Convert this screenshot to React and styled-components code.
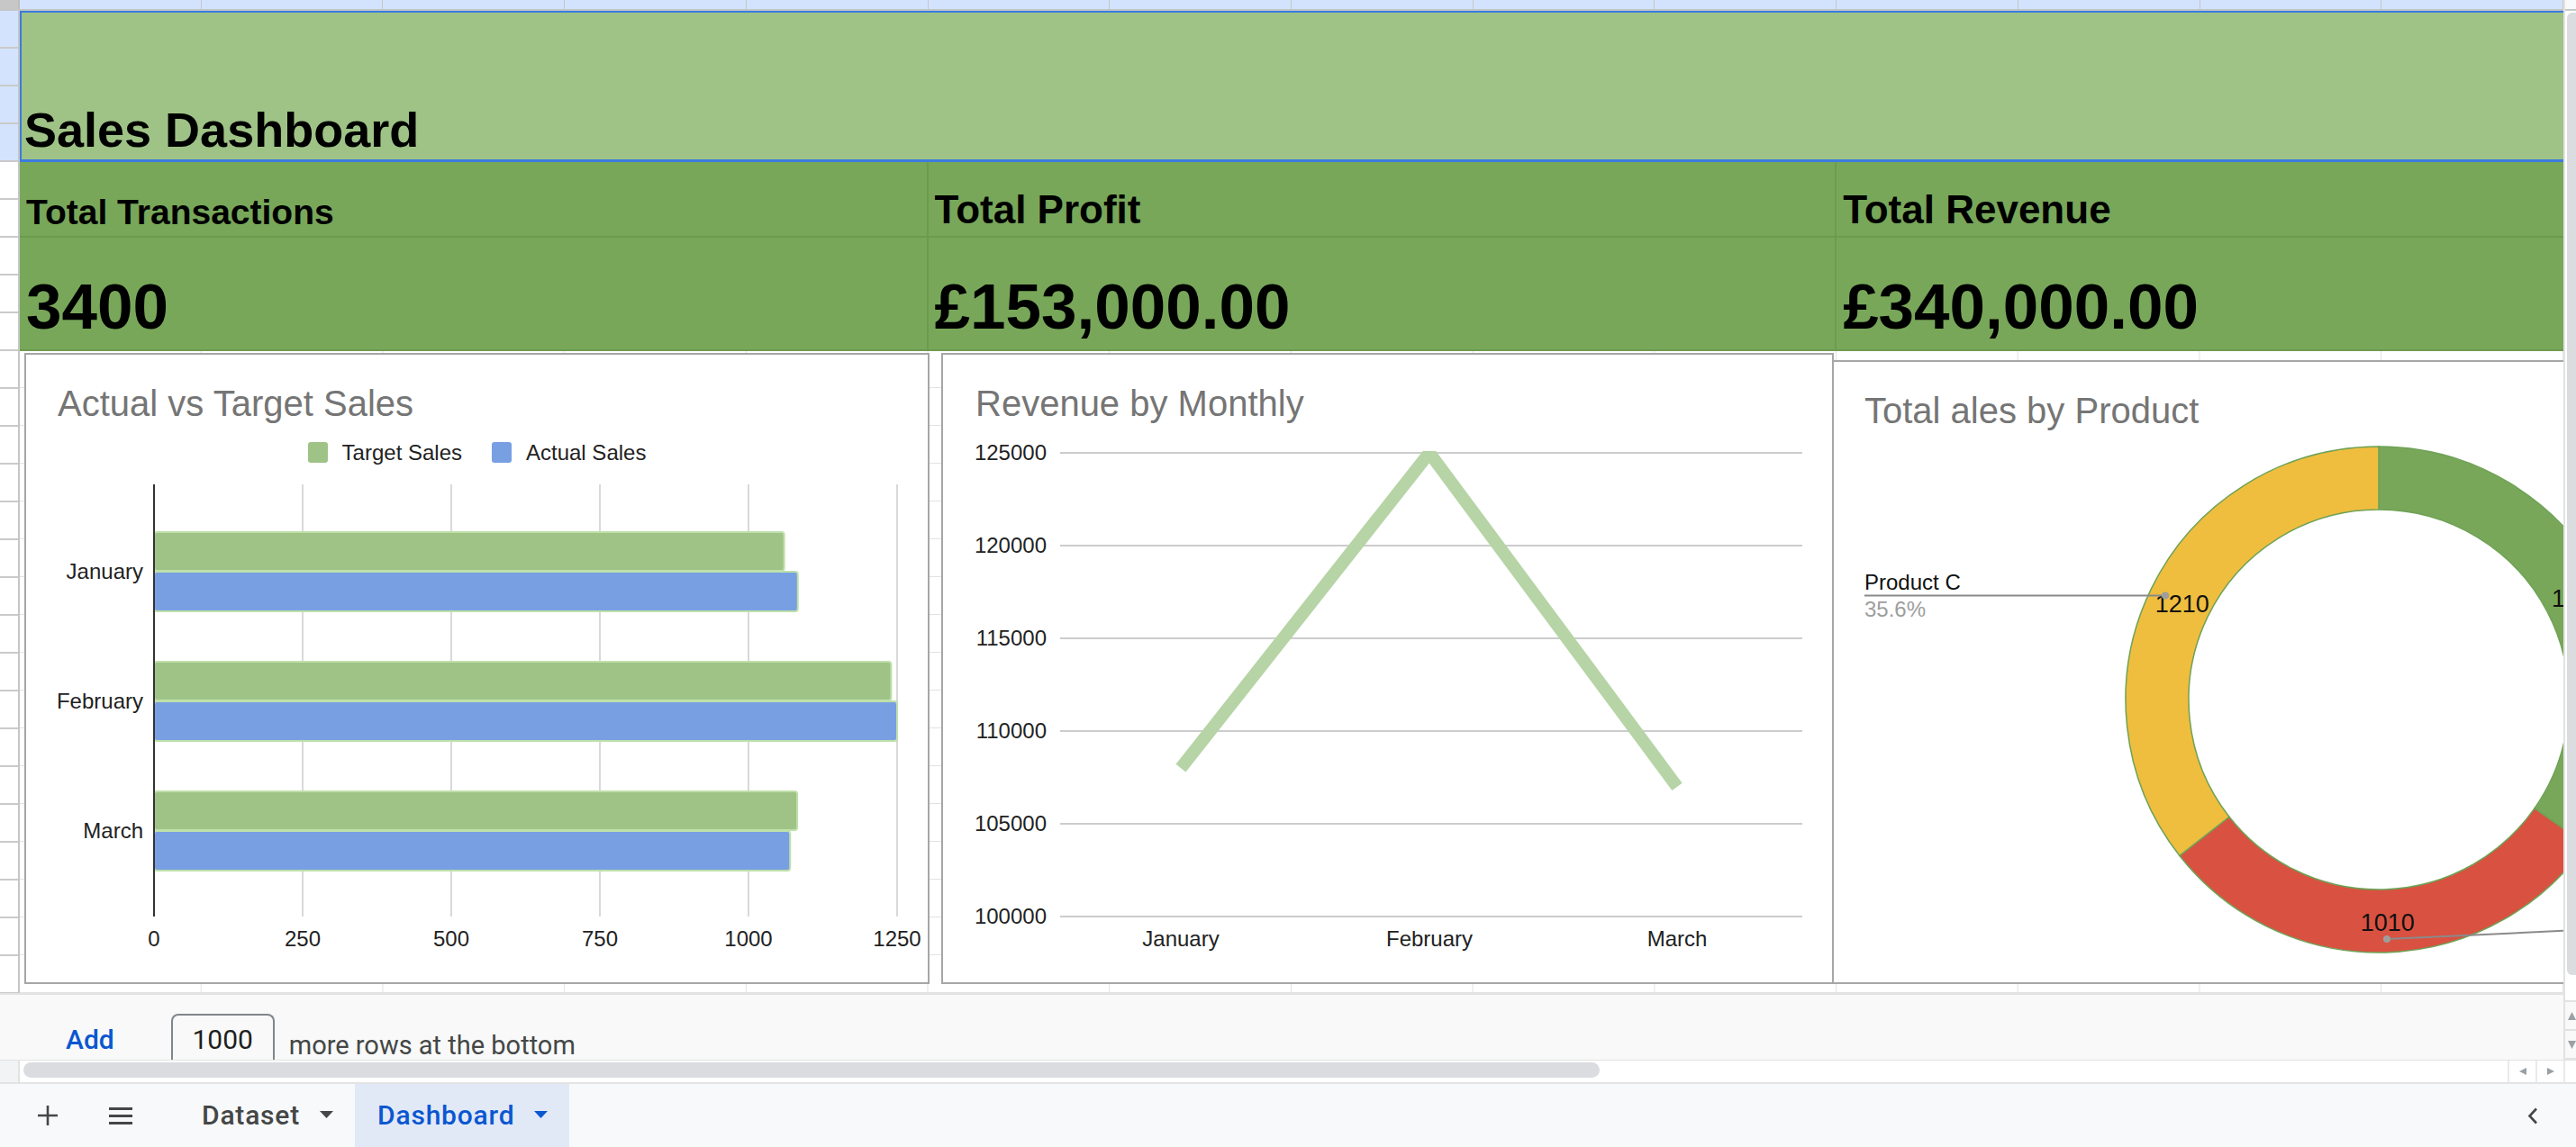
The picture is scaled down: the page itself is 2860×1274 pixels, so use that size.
import React from "react";
import styled, { createGlobalStyle } from "styled-components";

const COL_W = 2824 / 14;
const ROW_H = 42;
const UI_FONT = `Roboto, "Liberation Sans", Arial, sans-serif`;

const GlobalStyle = createGlobalStyle`
  html, body {
    margin: 0;
    padding: 0;
    background: #ffffff;
    overflow: hidden;
  }
  body {
    font-family: "Liberation Sans", Arial, sans-serif;
    color: #000000;
  }
  * {
    box-sizing: border-box;
  }
`;

const Page = styled.div`
  width: 2860px;
  height: 1274px;
  display: flex;
  flex-direction: column;
  overflow: hidden;
`;

const Workspace = styled.div`
  display: flex;
  height: 1177px;
  flex-shrink: 0;
`;

const MainColumn = styled.div`
  width: 2846px;
  display: flex;
  flex-direction: column;
`;

const ColumnHeaderBar = styled.div`
  display: flex;
  height: 12px;
  flex-shrink: 0;
  border-bottom: 2px solid #c4c7c5;
`;

const CornerCell = styled.div`
  width: 22px;
  background: #c7c7c7;
  border-right: 2px solid #bdbdbd;
`;

const ColumnHeader = styled.div`
  flex: 1;
  background: #d3e3fd;
  border-right: 1px solid #c4c7c5;
`;

const Body = styled.div`
  display: flex;
  height: 1091px;
  flex-shrink: 0;
  overflow: hidden;
`;

const RowHeaders = styled.div`
  width: 22px;
  flex-shrink: 0;
  border-right: 2px solid #c4c7c5;
  display: flex;
  flex-direction: column;
  overflow: hidden;
`;

const RowNumber = styled.div`
  height: ${ROW_H}px;
  flex-shrink: 0;
  background: ${(p) => (p.$selected ? "#d3e3fd" : "#ffffff")};
  border-bottom: 2px solid #cacaca;
`;

const SheetArea = styled.div`
  width: 2824px;
  display: flex;
  flex-direction: column;
  overflow: hidden;
`;

const TitleBand = styled.div`
  height: 168px;
  flex-shrink: 0;
  display: flex;
  align-items: flex-end;
  padding: 0 0 6px 3px;
  background: #9fc386;
  border-top: 2px solid #3c7be0;
  border-bottom: 3px solid #3c7be0;
  border-left: 2px solid #3c7be0;
`;

const SheetTitle = styled.h1`
  margin: 0;
  font-size: 54px;
  line-height: 1;
  font-weight: 700;
  white-space: nowrap;
`;

const KpiRow = styled.div`
  display: flex;
  height: ${(p) => p.$height}px;
  flex-shrink: 0;
  background: #78a75a;
  border-bottom: 2px solid #6c9b50;
`;

const KpiCell = styled.div`
  width: ${(p) => (p.$cols ? `${p.$cols * COL_W}px` : "auto")};
  flex: ${(p) => (p.$cols ? "none" : 1)};
  display: flex;
  align-items: flex-end;
  padding: 0 0 ${(p) => p.$pad}px 7px;
  border-right: ${(p) => (p.$cols ? "2px solid #6c9b50" : "none")};
  font-size: ${(p) => p.$size}px;
  font-weight: 700;
  line-height: 1;
  white-space: nowrap;
  overflow: hidden;
`;

const ChartsRow = styled.div`
  flex: 1;
  display: flex;
  align-items: flex-start;
  padding-top: 2px;
  background-color: #ffffff;
  background-image: linear-gradient(to right, #e2e2e2 1px, transparent 1px),
    linear-gradient(to bottom, #e2e2e2 1px, transparent 1px);
  background-size: ${COL_W}px ${ROW_H}px;
  background-position: ${COL_W - 1}px ${ROW_H - 2}px;
`;

const ChartFrame = styled.div`
  flex-shrink: 0;
  width: ${(p) => p.$width}px;
  height: ${(p) => p.$height}px;
  margin-left: ${(p) => p.$offset}px;
  margin-top: ${(p) => p.$top || 0}px;
  display: flex;
  flex-direction: column;
  background: #ffffff;
  border: 2px solid #a6a6a6;
  overflow: hidden;
`;

const ChartTitle = styled.div`
  height: 74px;
  flex-shrink: 0;
  padding: 34px 0 0 ${(p) => p.$indent}px;
  font-size: 40px;
  line-height: 1;
  color: #757575;
  white-space: nowrap;
`;

const Legend = styled.div`
  height: 47px;
  margin-top: 11px;
  flex-shrink: 0;
  display: flex;
  justify-content: center;
  align-items: center;
  gap: 33px;
  font-size: 24px;
  color: #222222;
`;

const LegendItem = styled.div`
  display: flex;
  align-items: center;
  gap: 16px;
`;

const Swatch = styled.span`
  width: 22px;
  height: 23px;
  border-radius: 3px;
  background: ${(p) => p.$color};
`;

const PlotSvg = styled.svg`
  display: block;
  flex-shrink: 0;
  font-family: "Liberation Sans", Arial, sans-serif;
`;

const AddRowsBar = styled.div`
  height: 74px;
  flex-shrink: 0;
  display: flex;
  align-items: flex-end;
  padding-left: 73px;
  background: #f8f9f8;
  border-top: 2px solid #e3e3e3;
  font-family: ${UI_FONT};
  overflow: hidden;
`;

const AddLink = styled.span`
  margin-bottom: 7px;
  font-size: 30px;
  font-weight: 500;
  line-height: 1;
  color: #0b57d0;
`;

const RowCountBox = styled.div`
  width: 115px;
  height: 51px;
  margin-left: 63px;
  display: flex;
  justify-content: center;
  padding-top: 12px;
  border: 2px solid #80868b;
  border-bottom: none;
  border-radius: 8px 8px 0 0;
  font-size: 30px;
  line-height: 1;
  color: #1f1f1f;
`;

const MoreText = styled.span`
  margin: 0 0 1px 16px;
  font-size: 29px;
  line-height: 1;
  color: #444746;
  white-space: nowrap;
`;

const VScroll = styled.div`
  width: 14px;
  flex-shrink: 0;
  display: flex;
  flex-direction: column;
  border-left: 2px solid #e1e3e1;
  background: #ffffff;
`;

const VScrollHead = styled.div`
  height: 12px;
  flex-shrink: 0;
  background: #f8f9fa;
  border-bottom: 2px solid #c4c7c5;
`;

const VThumb = styled.div`
  height: 1069px;
  margin: 2px 0 0 2px;
  flex-shrink: 0;
  border-radius: 6px 0 0 6px;
  background: #dadce0;
`;

const VSpacer = styled.div`
  flex: 1;
  border-bottom: 2px solid #e1e3e1;
`;

const VButton = styled.div`
  height: 32px;
  flex-shrink: 0;
  display: flex;
  align-items: center;
  justify-content: flex-end;
  border-bottom: 2px solid #e1e3e1;
  background: #f8f9f8;
`;

const HScrollRow = styled.div`
  height: 25px;
  flex-shrink: 0;
  display: flex;
  background: #ffffff;
  border-top: 1px solid #e1e3e1;
`;

const ScrollCorner = styled.div`
  width: 22px;
  flex-shrink: 0;
  background: #f1f3f4;
  border-right: 2px solid #e1e3e1;
`;

const HTrack = styled.div`
  flex: 1;
  padding: 2px 4px 0;
`;

const HThumb = styled.div`
  width: 1750px;
  height: 17px;
  border-radius: 9px;
  background: #dadce0;
`;

const ScrollButton = styled.div`
  width: ${(p) => p.$w || 31}px;
  flex-shrink: 0;
  display: flex;
  align-items: center;
  justify-content: center;
  border-left: 2px solid #e8eaed;
`;

const TabBar = styled.div`
  height: 72px;
  flex-shrink: 0;
  display: flex;
  align-items: stretch;
  padding-left: 42px;
  background: #f8f9fa;
  border-top: 2px solid #e3e3e3;
  font-family: ${UI_FONT};
`;

const IconButton = styled.div`
  display: flex;
  align-items: center;
  margin-right: ${(p) => p.$gap}px;
`;

const SheetTab = styled.div`
  display: flex;
  align-items: center;
  gap: 22px;
  padding: 0 24px 2px ${(p) => (p.$active ? 25 : 24)}px;
  background: ${(p) => (p.$active ? "#e1e9f7" : "transparent")};
  color: ${(p) => (p.$active ? "#0b57d0" : "#444746")};
  font-size: 30px;
  font-weight: 500;
  letter-spacing: 0.8px;
`;

const TabScroller = styled.div`
  margin-left: auto;
  padding-right: 42px;
  display: flex;
  align-items: center;
`;

const barData = [
  { month: "January", target: 1060, actual: 1083 },
  { month: "February", target: 1240, actual: 1250 },
  { month: "March", target: 1082, actual: 1070 },
];

const revenueData = [
  { month: "January", value: 108000 },
  { month: "February", value: 125000 },
  { month: "March", value: 107000 },
];

const productData = [
  { name: "Product A", value: 1180, color: "#78a75a" },
  { name: "Product B", value: 1010, color: "#d95141" },
  { name: "Product C", value: 1210, color: "#efbe3f" },
];

function ActualVsTarget() {
  const x0 = 142;
  const xs = (v) => x0 + (v * 165) / 250;
  return (
    <ChartFrame $width={1005} $height={701} $offset={5}>
      <ChartTitle $indent={35}>Actual vs Target Sales</ChartTitle>
      <Legend>
        <LegendItem>
          <Swatch $color="#9fc386" />
          Target Sales
        </LegendItem>
        <LegendItem>
          <Swatch $color="#789fe2" />
          Actual Sales
        </LegendItem>
      </Legend>
      <PlotSvg width="1001" height="565">
        {[0, 250, 500, 750, 1000, 1250].map((t) => (
          <g key={t}>
            <line x1={xs(t)} y1="12" x2={xs(t)} y2="492" stroke="#cccccc" strokeWidth="1.5" />
            <text x={xs(t)} y="525" fontSize="24" fill="#222" textAnchor="middle">
              {t}
            </text>
          </g>
        ))}
        {barData.map((d, i) => (
          <g key={d.month}>
            <rect x={x0} y={65 + i * 144} width={xs(d.target) - x0} height="43" rx="3" fill="#9fc386" stroke="#bfe0aa" strokeWidth="2" />
            <rect x={x0} y={109 + i * 144} width={xs(d.actual) - x0} height="44" rx="3" fill="#789fe2" stroke="#bfe0aa" strokeWidth="2" />
            <text x="130" y={117 + i * 144} fontSize="24" fill="#222" textAnchor="end">
              {d.month}
            </text>
          </g>
        ))}
        <line x1={x0} y1="12" x2={x0} y2="492" stroke="#333333" strokeWidth="2" />
      </PlotSvg>
    </ChartFrame>
  );
}

function RevenueByMonth() {
  const ys = (v) => 550 - ((v - 100000) / 25000) * 515;
  const xsPos = [264, 540, 815];
  const ticks = [125000, 120000, 115000, 110000, 105000, 100000];
  const points = revenueData.map((d, i) => `${xsPos[i]},${ys(d.value)}`).join(" ");
  return (
    <ChartFrame $width={991} $height={701} $offset={13}>
      <ChartTitle $indent={36}>Revenue by Monthly</ChartTitle>
      <PlotSvg width="987" height="623">
        <defs>
          <clipPath id="revenue-plot">
            <rect x="120" y="33" width="850" height="560" />
          </clipPath>
        </defs>
        {ticks.map((t) => (
          <g key={t}>
            <line x1="130" y1={ys(t)} x2="954" y2={ys(t)} stroke="#cccccc" strokeWidth="2" />
            <text x="115" y={ys(t) + 8} fontSize="24" fill="#222" textAnchor="end">
              {t}
            </text>
          </g>
        ))}
        {revenueData.map((d, i) => (
          <text key={d.month} x={xsPos[i]} y="583" fontSize="24" fill="#222" textAnchor="middle">
            {d.month}
          </text>
        ))}
        <polyline
          points={points}
          fill="none"
          stroke="#b6d4a6"
          strokeWidth="14"
          strokeLinejoin="miter"
          strokeMiterlimit="10"
          clipPath="url(#revenue-plot)"
        />
      </PlotSvg>
    </ChartFrame>
  );
}

function polar(cx, cy, r, deg) {
  const a = (deg * Math.PI) / 180;
  return [cx + r * Math.sin(a), cy - r * Math.cos(a)];
}

function ringSlice(cx, cy, r0, r1, a0, a1) {
  const large = a1 - a0 > 180 ? 1 : 0;
  const [ox0, oy0] = polar(cx, cy, r1, a0);
  const [ox1, oy1] = polar(cx, cy, r1, a1);
  const [ix1, iy1] = polar(cx, cy, r0, a1);
  const [ix0, iy0] = polar(cx, cy, r0, a0);
  return `M${ox0} ${oy0} A${r1} ${r1} 0 ${large} 1 ${ox1} ${oy1} L${ix1} ${iy1} A${r0} ${r0} 0 ${large} 0 ${ix0} ${iy0} Z`;
}

function SalesByProduct() {
  const cx = 605;
  const cy = 301;
  const total = productData.reduce((s, d) => s + d.value, 0);
  let start = 0;
  const slices = productData.map((d) => {
    const sweep = (d.value / total) * 360;
    const slice = { ...d, a0: start, a1: start + sweep };
    start += sweep;
    return slice;
  });
  return (
    <ChartFrame $width={1005} $height={693} $offset={-2} $top={8}>
      <ChartTitle $indent={34}>Total ales by Product</ChartTitle>
      <PlotSvg width="1001" height="617">
        {slices.map((s) => (
          <path key={s.name} d={ringSlice(cx, cy, 211, 281, s.a0, s.a1)} fill={s.color} stroke="#6fa256" strokeWidth="1.5" />
        ))}
        {slices.map((s) => {
          const [lx, ly] = polar(cx, cy, 246, (s.a0 + s.a1) / 2);
          return (
            <text key={s.name} x={lx + 3} y={ly + 11} fontSize="27" fill="#111" textAnchor="middle">
              {s.value}
            </text>
          );
        })}
        <line x1="34" y1="185.5" x2="368" y2="185.5" stroke="#8a8a8a" strokeWidth="2" />
        <circle cx="368" cy="185.5" r="4" fill="#9e9e9e" />
        <text x="34" y="179" fontSize="24" fill="#111">
          Product C
        </text>
        <text x="34" y="209" fontSize="24" fill="#9e9e9e">
          35.6%
        </text>
        <line x1="614" y1="567" x2="1000" y2="549" stroke="#8a8a8a" strokeWidth="2" />
        <circle cx="614" cy="567" r="4" fill="#9e9e9e" />
      </PlotSvg>
    </ChartFrame>
  );
}

function Triangle({ dir, color = "#9aa0a6", size = 8 }) {
  const paths = {
    up: `M0 ${size}L${size / 2} 0L${size} ${size}Z`,
    down: `M0 0L${size} 0L${size / 2} ${size}Z`,
    left: `M${size} 0L${size} ${size}L0 ${size / 2}Z`,
    right: `M0 0L${size} ${size / 2}L0 ${size}Z`,
  };
  return (
    <svg width={size} height={size} viewBox={`0 0 ${size} ${size}`}>
      <path d={paths[dir]} fill={color} />
    </svg>
  );
}

function Caret({ color }) {
  return (
    <svg width="15" height="8" viewBox="0 0 15 8">
      <path d="M0 0H15L7.5 8Z" fill={color} />
    </svg>
  );
}

export default function App() {
  return (
    <>
      <GlobalStyle />
      <Page>
        <Workspace>
          <MainColumn>
            <ColumnHeaderBar>
              <CornerCell />
              {Array.from({ length: 14 }).map((_, i) => (
                <ColumnHeader key={i} />
              ))}
            </ColumnHeaderBar>
            <Body>
              <RowHeaders>
                {Array.from({ length: 27 }).map((_, i) => (
                  <RowNumber key={i} $selected={i < 4} />
                ))}
              </RowHeaders>
              <SheetArea>
                <TitleBand>
                  <SheetTitle>Sales Dashboard</SheetTitle>
                </TitleBand>
                <KpiRow $height={84}>
                  <KpiCell $cols={5} $size={39} $pad={7}>Total Transactions</KpiCell>
                  <KpiCell $cols={5} $size={44} $pad={7}>Total Profit</KpiCell>
                  <KpiCell $size={44} $pad={7}>Total Revenue</KpiCell>
                </KpiRow>
                <KpiRow $height={126}>
                  <KpiCell $cols={5} $size={71} $pad={12}>3400</KpiCell>
                  <KpiCell $cols={5} $size={71} $pad={12}>£153,000.00</KpiCell>
                  <KpiCell $size={71} $pad={12}>£340,000.00</KpiCell>
                </KpiRow>
                <ChartsRow>
                  <ActualVsTarget />
                  <RevenueByMonth />
                  <SalesByProduct />
                </ChartsRow>
              </SheetArea>
            </Body>
            <AddRowsBar>
              <AddLink>Add</AddLink>
              <RowCountBox>1000</RowCountBox>
              <MoreText>more rows at the bottom</MoreText>
            </AddRowsBar>
          </MainColumn>
          <VScroll>
            <VScrollHead />
            <VThumb />
            <VSpacer />
            <VButton>
              <Triangle dir="up" size={9} />
            </VButton>
            <VButton>
              <Triangle dir="down" size={9} />
            </VButton>
          </VScroll>
        </Workspace>
        <HScrollRow>
          <ScrollCorner />
          <HTrack>
            <HThumb />
          </HTrack>
          <ScrollButton>
            <Triangle dir="left" />
          </ScrollButton>
          <ScrollButton>
            <Triangle dir="right" />
          </ScrollButton>
          <ScrollButton $w={14} />
        </HScrollRow>
        <TabBar>
          <IconButton $gap={57}>
            <svg width="22" height="22" viewBox="0 0 22 22">
              <path d="M11 0V22M0 11H22" stroke="#444746" strokeWidth="2.6" />
            </svg>
          </IconButton>
          <IconButton $gap={53}>
            <svg width="26" height="19" viewBox="0 0 26 19">
              <path d="M0 1.5H26M0 9.5H26M0 17.5H26" stroke="#444746" strokeWidth="3" />
            </svg>
          </IconButton>
          <SheetTab>
            Dataset
            <Caret color="#444746" />
          </SheetTab>
          <SheetTab $active>
            Dashboard
            <Caret color="#0b57d0" />
          </SheetTab>
          <TabScroller>
            <svg width="12" height="19" viewBox="0 0 12 19">
              <path d="M10 1.5L2.5 9.5L10 17.5" stroke="#444746" strokeWidth="2.6" fill="none" />
            </svg>
          </TabScroller>
        </TabBar>
      </Page>
    </>
  );
}
